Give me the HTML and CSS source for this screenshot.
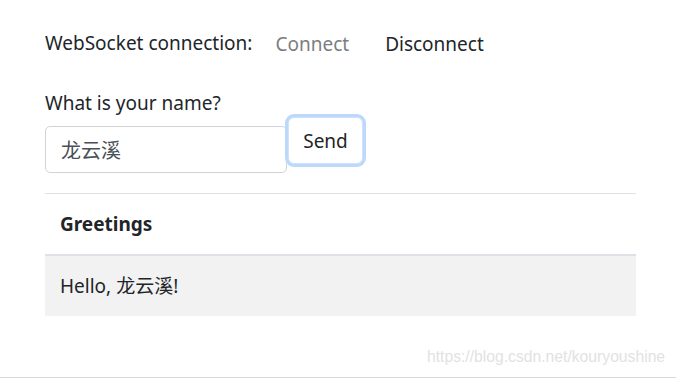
FILE: index.html
```html
<!DOCTYPE html>
<html>
<head>
<meta charset="utf-8">
<link rel="stylesheet" href="styles.css">
</head>
<body>
<div class="page">
  <div class="conn-row">
    <span class="conn-label">WebSocket connection:</span>
    <button class="btn btn-disabled">Connect</button>
    <button class="btn">Disconnect</button>
  </div>
  <div class="name-row">
    <div class="name-group">
      <label class="name-label">What is your name?</label>
      <input class="name-input" type="text" value="龙云溪">
    </div>
    <button class="btn btn-send">Send</button>
  </div>
  <table class="greet-table">
    <thead>
      <tr><th>Greetings</th></tr>
    </thead>
    <tbody>
      <tr><td>Hello, 龙云溪!</td></tr>
    </tbody>
  </table>
</div>
<div class="watermark">https://blog.csdn.net/kouryoushine</div>
</body>
</html>
```

FILE: styles.css
```css
html, body {
  margin: 0;
  padding: 0;
  background: #fff;
}
body {
  width: 676px;
  height: 377px;
  border-bottom: 1px solid #d8d8d8;
  position: relative;
  overflow: hidden;
  font-family: "Noto Sans", "Noto Sans CJK SC", sans-serif;
  font-size: 19px;
  line-height: 30px;
  color: #212529;
}
.page {
  padding: 19px 40px 0 45px;
}
.conn-row {
  display: flex;
  align-items: center;
  height: 48px;
}
.conn-label {
  margin-right: 7px;
}
.btn {
  font: inherit;
  color: #212529;
  background: transparent;
  border: 1px solid transparent;
  border-radius: 5px;
  padding: 8px 15px;
  height: 47px;
  margin-right: 4px;
}
.btn-disabled {
  color: #7b7d80;
}
.name-row {
  display: flex;
  align-items: flex-end;
  margin-top: 21px;
}
.name-group {
  display: flex;
  flex-direction: column;
}
.name-label {
  margin-bottom: 8px;
}
.name-input {
  box-sizing: border-box;
  width: 242px;
  height: 47px;
  font: inherit;
  font-size: 20px;
  font-family: "Noto Sans CJK SC", sans-serif;
  color: #495057;
  border: 1px solid #ced4da;
  border-radius: 5px;
  padding: 0 15px;
  margin: 0;
}
.btn-send {
  box-sizing: border-box;
  width: 75px;
  height: 47px;
  margin: 0 0 9px 1px;
  background: #fff;
  border: 1px solid #cfe2fb;
  border-radius: 6px;
  box-shadow: 0 0 0 3px #bcd9fc;
  padding: 0;
}
.greet-table {
  margin-top: 20px;
  width: 591px;
  border-collapse: collapse;
}
.greet-table th,
.greet-table td {
  text-align: left;
  padding: 15px 15px;
  height: 30px;
}
.greet-table th {
  font-weight: 700;
  border-top: 1px solid #dee2e6;
  border-bottom: 2px solid #dee2e6;
}
.greet-table td {
  background: #f2f2f2;
}
.watermark {
  position: absolute;
  left: 427px;
  top: 347px;
  font-family: "Liberation Sans", Arial, sans-serif;
  font-size: 15.7px;
  line-height: 20px;
  color: #e2e2e2;
}
```
